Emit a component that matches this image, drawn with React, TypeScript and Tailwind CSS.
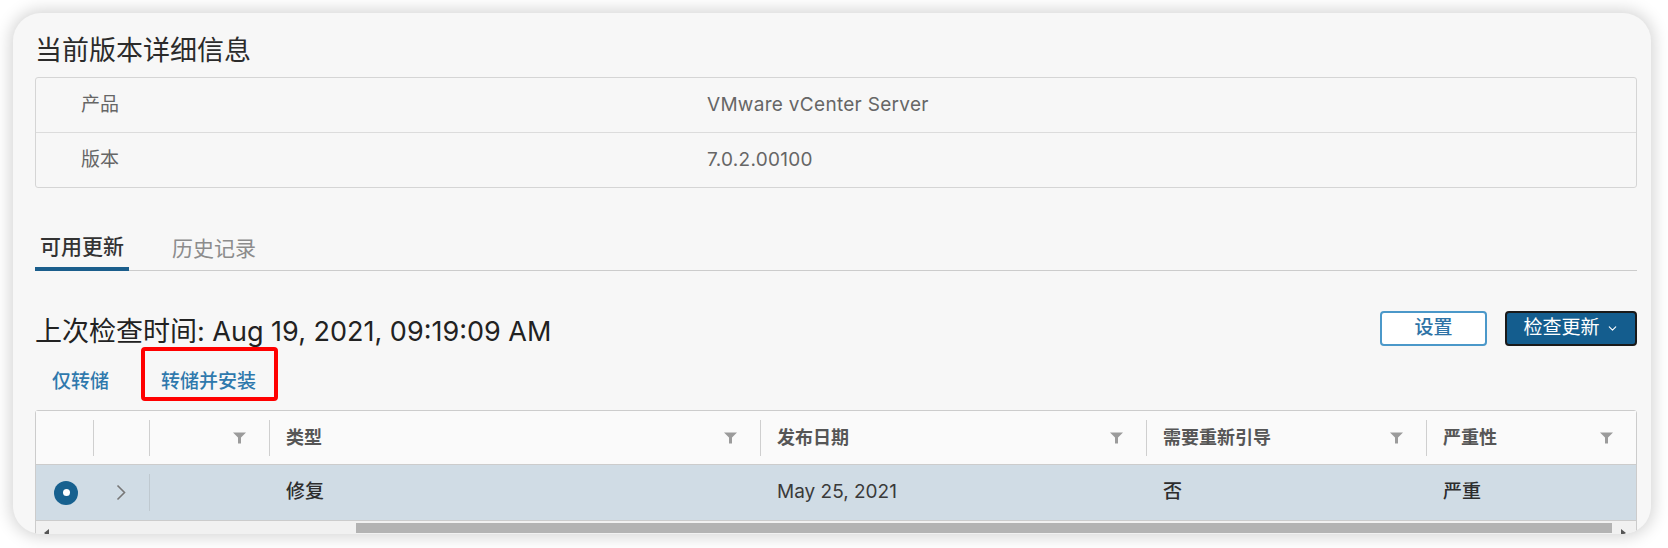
import { ChevronDown } from 'lucide-react'

const FONT = { fontFamily: 'Inter, "Noto Sans CJK SC", sans-serif' }

function FilterIcon() {
  return (
    <svg width="13" height="12" viewBox="0 0 13 12" className="shrink-0">
      <path d="M0 0.5h13L8 5.5V11.5H5V5.5z" fill="#9b9b9b" />
    </svg>
  )
}

function HeaderCell({ label, filter = true }: { label?: string; filter?: boolean }) {
  return (
    <div className="flex items-center h-full">
      <div className="w-px h-[36px] bg-[#cfcfcf]" />
      <span className="flex-1 pl-[16px] text-[18px] font-bold text-[#565656]">{label}</span>
      {filter && (
        <span className="mr-[23px]">
          <FilterIcon />
        </span>
      )}
    </div>
  )
}

export default function App() {
  return (
    <div className="w-[1668px] h-[548px] bg-white pt-[13px] pl-[13px]" style={FONT}>
      <div className="w-[1638px] h-[521px] rounded-[28px] bg-[#f7f7f7] shadow-[0_0_16px_3px_rgba(0,0,0,0.17)] overflow-hidden pt-[20px] pl-[22px] pr-[14px]">
        {/* Title */}
        <h3 className="text-[27px] leading-[36px] text-[#2b2b2b]">当前版本详细信息</h3>

        {/* Version details */}
        <div className="mt-[8px] border border-[#d5d5d5] rounded-[3px] text-[19px] text-[#666]">
          <div className="grid grid-cols-[671px_1fr] h-[55px] items-center border-b border-[#dcdcdc]">
            <span className="pl-[45px]">产品</span>
            <span className="tracking-[0.3px]">VMware vCenter Server</span>
          </div>
          <div className="grid grid-cols-[671px_1fr] h-[54px] items-center">
            <span className="pl-[45px]">版本</span>
            <span className="tracking-[0.3px]">7.0.2.00100</span>
          </div>
        </div>

        {/* Tabs */}
        <div className="mt-[39px] flex h-[44px] border-b border-[#cccccc]">
          <div className="h-[44px] -mb-px border-b-4 border-[#1b5e8c] px-[5px] flex items-center text-[21px] font-medium text-[#333]">
            可用更新
          </div>
          <div className="ml-[38px] h-[44px] px-[5px] flex items-center text-[21px] text-[#8c8c8c]">
            历史记录
          </div>
        </div>

        {/* Last check + actions */}
        <div className="mt-[40px] h-[35px] flex items-center justify-between">
          <div className="pt-[5px] text-[27px] leading-[35px] text-[#222]">
            上次检查时间: Aug 19, 2021, 09:19:09 AM
          </div>
          <div className="flex items-center gap-[18px]">
            <button className="w-[107px] h-[35px] rounded-[4px] border-2 border-[#4b98c9] bg-white text-[19px] font-medium text-[#2e73a6]">
              设置
            </button>
            <button className="w-[132px] h-[35px] rounded-[4px] border-2 border-[#1a1a1a] bg-[#145d8e] text-[19px] text-white flex items-center justify-center gap-[6px]">
              检查更新
              <ChevronDown size={13} strokeWidth={2} />
            </button>
          </div>
        </div>

        {/* Link buttons */}
        <div className="relative mt-[24px] h-[24px] flex items-center pl-[17px] gap-[52px] text-[19px] font-medium text-[#2f79ad]">
          <span>仅转储</span>
          <span>转储并安装</span>
          <div className="absolute left-[106px] top-[-23px] w-[137px] h-[54px] border-4 border-[#ff0000] rounded-[4px]" />
        </div>

        {/* Updates grid */}
        <div className="mt-[16px] border border-[#cccccc] rounded-t-[3px]">
          <div className="grid grid-cols-[57px_56px_120px_491px_386px_280px_1fr] h-[54px] bg-[#fafafa] border-b border-[#cccccc]">
            <div />
            <HeaderCell filter={false} />
            <HeaderCell />
            <HeaderCell label="类型" />
            <HeaderCell label="发布日期" />
            <HeaderCell label="需要重新引导" />
            <HeaderCell label="严重性" />
          </div>
          <div className="grid grid-cols-[57px_56px_120px_491px_386px_280px_1fr] h-[56px] items-center bg-[#d0dce5] border-b border-[#cccccc] text-[19px] text-[#2d2d2d]">
            <div className="flex justify-center pl-[3px]">
              <div className="w-[24px] h-[24px] rounded-full bg-[#17618f] flex items-center justify-center">
                <div className="w-[7px] h-[7px] rounded-full bg-white" />
              </div>
            </div>
            <div className="flex justify-center">
              <svg width="10" height="17" viewBox="0 0 10 17">
                <polyline points="1.5,1.5 8.5,8.5 1.5,15.5" fill="none" stroke="#777" strokeWidth="1.6" />
              </svg>
            </div>
            <div className="flex items-center h-full">
              <div className="w-px h-[37px] bg-[#bfc9d0]" />
            </div>
            <span className="pl-[17px] font-medium">修复</span>
            <span className="pl-[17px] text-[#3a3a3a]">May 25, 2021</span>
            <span className="pl-[17px] font-medium">否</span>
            <span className="pl-[17px] font-medium">严重</span>
          </div>
          {/* horizontal scrollbar */}
          <div className="flex h-[14px] bg-[#f1f1f1] pt-[2px]">
            <div className="w-[320px] relative">
              <span className="absolute left-[8px] top-[6px] w-0 h-0 border-y-[4px] border-y-transparent border-r-[5px] border-r-[#555]" />
            </div>
            <div className="w-[1256px] h-[10px] bg-[#b3b3b3]" />
            <div className="flex-1 relative">
              <span className="absolute left-[9px] top-[6px] w-0 h-0 border-y-[4px] border-y-transparent border-l-[5px] border-l-[#555]" />
            </div>
          </div>
        </div>
      </div>
    </div>
  )
}
